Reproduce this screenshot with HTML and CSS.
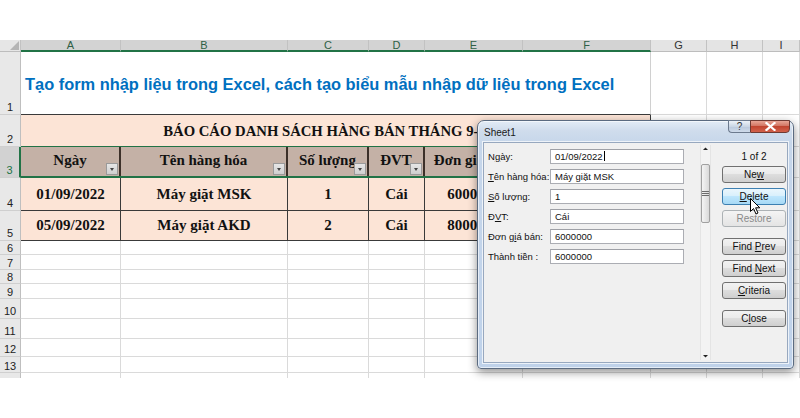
FILE: index.html
```html
<!DOCTYPE html>
<html lang="vi">
<head>
<meta charset="utf-8">
<title>Excel form</title>
<link rel="stylesheet" href="styles.css">
</head>
<body>
<div class="page">
  <div class="topgap"></div>
  <div class="sheet">
    <div class="row colhead">
      <span class="corner"><svg width="10" height="10" viewBox="0 0 10 10"><polygon points="10,1 10,10 1,10" fill="#b5b5b5"/></svg></span>
      <span class="ch sel">A</span><span class="ch sel">B</span><span class="ch sel">C</span><span class="ch sel">D</span><span class="ch sel">E</span><span class="ch sel">F</span>
      <span class="ch">G</span><span class="ch">H</span><span class="ch">I</span>
    </div>
    <div class="row r1">
      <span class="rh">1</span>
      <span class="merge title">Tạo form nhập liệu trong Excel, cách tạo biểu mẫu nhập dữ liệu trong Excel</span>
      <span></span><span></span><span></span>
    </div>
    <div class="row r2">
      <span class="rh">2</span>
      <span class="merge report">BÁO CÁO DANH SÁCH HÀNG BÁN THÁNG 9-2022</span>
      <span></span><span></span><span></span>
    </div>
    <div class="row r3">
      <span class="rh rh-sel">3</span>
      <div class="selrange">
        <span class="th">Ngày<i class="flt"></i></span>
        <span class="th">Tên hàng hóa<i class="flt"></i></span>
        <span class="th">Số lượng<i class="flt"></i></span>
        <span class="th">ĐVT<i class="flt"></i></span>
        <span class="th">Đơn giá bán<i class="flt"></i></span>
        <span class="th">Thành tiền<i class="flt"></i></span>
      </div>
      <span></span><span></span><span></span>
    </div>
    <div class="row r4">
      <span class="rh">4</span>
      <span class="td">01/09/2022</span><span class="td">Máy giặt MSK</span><span class="td">1</span><span class="td">Cái</span><span class="td">6000000</span><span class="td">6000000</span>
      <span></span><span></span><span></span>
    </div>
    <div class="row r5">
      <span class="rh">5</span>
      <span class="td">05/09/2022</span><span class="td">Máy giặt AKD</span><span class="td">2</span><span class="td">Cái</span><span class="td">8000000</span><span class="td">16000000</span>
      <span></span><span></span><span></span>
    </div>
    <div class="row r6"><span class="rh">6</span><span></span><span></span><span></span><span></span><span></span><span></span><span></span><span></span><span></span></div>
    <div class="row r7"><span class="rh">7</span><span></span><span></span><span></span><span></span><span></span><span></span><span></span><span></span><span></span></div>
    <div class="row r8"><span class="rh">8</span><span></span><span></span><span></span><span></span><span></span><span></span><span></span><span></span><span></span></div>
    <div class="row r9"><span class="rh">9</span><span></span><span></span><span></span><span></span><span></span><span></span><span></span><span></span><span></span></div>
    <div class="row r10"><span class="rh">10</span><span></span><span></span><span></span><span></span><span></span><span></span><span></span><span></span><span></span></div>
    <div class="row r11"><span class="rh">11</span><span></span><span></span><span></span><span></span><span></span><span></span><span></span><span></span><span></span></div>
    <div class="row r12"><span class="rh">12</span><span></span><span></span><span></span><span></span><span></span><span></span><span></span><span></span><span></span></div>
    <div class="row r13"><span class="rh">13</span><span></span><span></span><span></span><span></span><span></span><span></span><span></span><span></span><span></span></div>
    <div class="row r14"><span class="rh">14</span><span></span><span></span><span></span><span></span><span></span><span></span><span></span><span></span><span></span></div>
  </div>

  <div class="dlg">
    <div class="tbar">
      <span class="ttl">Sheet1</span>
      <div class="tbtns">
        <span class="help">?</span>
        <span class="xbtn"><svg width="11" height="9" viewBox="0 0 11 9"><path d="M1.5 1 L9.5 8 M9.5 1 L1.5 8" stroke="#fff" stroke-width="2.2" stroke-linecap="square"/></svg></span>
      </div>
    </div>
    <div class="panel">
      <div class="fields">
        <div class="frow"><label>N<u>g</u>ày:</label><div class="inp">01/09/2022<i class="caret"></i></div></div>
        <div class="frow"><label><u>T</u>ên hàng hóa:</label><div class="inp">Máy giặt MSK</div></div>
        <div class="frow"><label><u>S</u>ố lượng:</label><div class="inp">1</div></div>
        <div class="frow"><label>Đ<u>V</u>T:</label><div class="inp">Cái</div></div>
        <div class="frow"><label>Đơn g<u>i</u>á bán:</label><div class="inp">6000000</div></div>
        <div class="frow"><label>Thành tiền :</label><div class="inp">6000000</div></div>
      </div>
      <div class="vscroll">
        <svg class="arr" width="11" height="8" viewBox="0 0 11 8"><polygon points="3,5 8,5 5.5,2.5" fill="#222"/></svg>
        <div class="thumb"><svg width="7" height="7" viewBox="0 0 7 7"><path d="M0 1.5 H7 M0 3.5 H7 M0 5.5 H7" stroke="#6b6b6b" stroke-width="1"/></svg></div>
        <div class="track"></div>
        <svg class="arr" width="11" height="8" viewBox="0 0 11 8"><polygon points="3,3 8,3 5.5,5.5" fill="#222"/></svg>
      </div>
      <div class="btns">
        <div class="count">1 of 2</div>
        <button class="btn">Ne<u>w</u></button>
        <button class="btn hover"><u>D</u>elete</button>
        <button class="btn dis">Restore</button>
        <button class="btn grp">Find <u>P</u>rev</button>
        <button class="btn">Find <u>N</u>ext</button>
        <button class="btn"><u>C</u>riteria</button>
        <button class="btn grp">C<u>l</u>ose</button>
      </div>
    </div>
    <svg class="cursor" width="11" height="17" viewBox="0 0 11 17"><path d="M0.5 0.5 L0.5 13.5 L3.5 10.5 L6 16 L8 15 L5.6 9.8 L9.8 9.8 Z" fill="#fff" stroke="#000" stroke-width="1" stroke-linejoin="round"/></svg>
  </div>
</div>
</body>
</html>
```

FILE: styles.css
```css
body {
  margin: 0;
  background: #ffffff;
  font-family: "Liberation Sans", Arial, sans-serif;
}

.page {
  width: 800px;
  height: 418px;
  position: relative;
  overflow: hidden;
  background: #ffffff;
}

.topgap {
  height: 40px;
}

.sheet {
  height: 338px;
  overflow: hidden;
}

.row {
  display: grid;
  grid-template-columns: 21px 100px 167px 81px 56px 98px 128px 56px 56px 37px;
}

.row > * {
  box-sizing: border-box;
  border-right: 1px solid #dadada;
  border-bottom: 1px solid #dadada;
  min-width: 0;
  overflow: hidden;
}

.r1 { height: 63px; }
.r2 { height: 32px; }
.r3 { height: 31px; }
.r4 { height: 33px; }
.r5 { height: 30px; }
.r6 { height: 14px; }
.r7 { height: 15px; }
.r8 { height: 14px; }
.r9 { height: 15px; }
.r10 { height: 20px; }
.r11 { height: 20px; }
.r12 { height: 18px; }
.r13 { height: 16px; }
.r14 { height: 16px; }

/* column headers */
.colhead {
  height: 12px;
}

.colhead > * {
  border-right: 1px solid #c2c2c2;
  border-bottom: 1px solid #bdbdbd;
}

.corner {
  background: #e6e6e6;
  display: flex;
  align-items: flex-end;
  justify-content: flex-end;
  padding: 0 1px 1px 0;
}

.ch {
  background: #e4e4e4;
  font-size: 11px;
  line-height: 11px;
  text-align: center;
  color: #333;
}

.ch.sel {
  background: #d3d3d3;
  color: #2f5f45;
  border-bottom: 2px solid #217346;
  line-height: 10px;
}

/* row headers */
.rh {
  background: #e8e8e8;
  border-right: 1px solid #bfbfbf !important;
  border-bottom: 1px solid #cfcfcf !important;
  font-size: 11px;
  line-height: 11px;
  color: #222;
  display: flex;
  align-items: flex-end;
  justify-content: center;
  padding-bottom: 1px;
}

.r6 .rh, .r7 .rh, .r8 .rh, .r9 .rh, .r13 .rh, .r14 .rh {
  padding-bottom: 0;
}

.rh-sel {
  background: #d2d2d2;
  color: #217346;
  border-right: 2px solid #217346 !important;
}

/* merged title cells */
.merge {
  grid-column: span 6;
  display: flex;
  align-items: center;
}

.title {
  color: #0070c0;
  font-weight: bold;
  font-size: 16.4px;
  padding-left: 4px;
  padding-top: 3px;
  border-right: 1px solid #d0d0d0;
  border-bottom: 1px solid #3a3a3a;
  white-space: nowrap;
}

.report {
  justify-content: center;
  background: #fce4d6;
  font-family: "Liberation Serif", "Times New Roman", serif;
  font-weight: bold;
  font-size: 14.7px;
  color: #111;
  border-right: 1px solid #3a3a3a;
  border-bottom: 1px solid #217346;
  white-space: nowrap;
  padding-top: 2px;
}

/* header row selection */
.selrange {
  grid-column: span 6;
  display: grid;
  grid-template-columns: 100px 167px 81px 56px 98px 128px;
  position: relative;
  border-right: none !important;
  border-bottom: 2px solid #217346 !important;
  overflow: visible;
}

.th {
  position: relative;
  box-sizing: border-box;
  background: #c4b1a6;
  border-right: 2px solid #3c3029;
  font-family: "Liberation Serif", "Times New Roman", serif;
  font-weight: bold;
  font-size: 15px;
  color: #111;
  display: flex;
  align-items: center;
  justify-content: center;
  white-space: nowrap;
  overflow: hidden;
  padding-bottom: 2px;
}

.flt {
  position: absolute;
  right: 1px;
  bottom: 1px;
  width: 12px;
  height: 12px;
  box-sizing: border-box;
  background: linear-gradient(#e6e6e6, #cfcfcf);
  border: 1px solid #9a9a9a;
}

.flt::after {
  content: "";
  position: absolute;
  left: 3px;
  top: 4px;
  border-left: 2.5px solid transparent;
  border-right: 2.5px solid transparent;
  border-top: 3px solid #444;
}

/* data rows */
.td {
  background: #fce4d6;
  border-right: 1px solid #3a3a3a !important;
  border-bottom: 1px solid #3a3a3a !important;
  font-family: "Liberation Serif", "Times New Roman", serif;
  font-weight: bold;
  font-size: 15px;
  color: #111;
  display: flex;
  align-items: center;
  justify-content: center;
  white-space: nowrap;
}

/* dialog */
.dlg {
  position: absolute;
  left: 477px;
  top: 120px;
  width: 317px;
  height: 249px;
  box-sizing: border-box;
  border: 1px solid #5b6b80;
  border-radius: 7px 7px 4px 4px;
  background: linear-gradient(180deg, #e3ecf6 0px, #cfdcec 10px, #c6d6ea 22px, #bfd2ea 100%);
  box-shadow: 0 3px 10px rgba(0, 0, 0, 0.45), inset 0 0 0 1px rgba(255, 255, 255, 0.6);
  font-family: "Liberation Sans", Arial, sans-serif;
  font-size: 9.5px;
  color: #111;
  display: flex;
  flex-direction: column;
  padding: 0 5px 5px 5px;
}

.tbar {
  height: 21px;
  display: flex;
  align-items: flex-start;
  justify-content: space-between;
}

.ttl {
  font-size: 10px;
  padding: 6px 0 0 1px;
  color: #1a1a1a;
}

.tbtns {
  display: flex;
  margin-top: -1px;
  margin-right: -2px;
}

.help {
  width: 22px;
  height: 13px;
  box-sizing: border-box;
  border: 1px solid #6c7a8e;
  border-right: none;
  border-radius: 0 0 0 4px;
  background: linear-gradient(#edf2f8, #cad6e5 50%, #b9c8dc 51%, #cfdbea);
  font-size: 10px;
  line-height: 11px;
  text-align: center;
  color: #333;
}

.xbtn {
  width: 40px;
  height: 13px;
  box-sizing: border-box;
  border: 1px solid #6e3a33;
  border-radius: 0 0 4px 0;
  background: linear-gradient(#e8a595, #d27563 45%, #c14530 50%, #d2614b);
  display: flex;
  align-items: center;
  justify-content: center;
}

.panel {
  flex: 1;
  display: flex;
  background: #f0f0f0;
  border: 1px solid #97a8bf;
  box-shadow: 0 0 0 1px rgba(255, 255, 255, 0.7);
}

.fields {
  width: 200px;
  padding: 6px 0 0 4px;
  box-sizing: content-box;
  display: flex;
  flex-direction: column;
  gap: 5px;
}

.frow {
  display: flex;
  align-items: center;
  height: 15px;
}

.frow label {
  width: 62px;
  white-space: nowrap;
}

.inp {
  position: relative;
  width: 134px;
  height: 15px;
  box-sizing: border-box;
  border: 1px solid #abadb3;
  border-top-color: #9ea0a6;
  background: #ffffff;
  padding-left: 4px;
  line-height: 13px;
  white-space: nowrap;
}

.caret {
  display: inline-block;
  width: 1px;
  height: 10px;
  background: #000;
  vertical-align: -1px;
  margin-left: 1px;
}

.vscroll {
  width: 11px;
  margin: 2px 0 2px 12px;
  display: flex;
  flex-direction: column;
  background: #f3f3f3;
  border-left: 1px solid #e4e4e4;
  border-right: 1px solid #e4e4e4;
  box-sizing: border-box;
  align-items: center;
}

.arr {
  flex: none;
  display: block;
}

.thumb {
  width: 9px;
  height: 59px;
  box-sizing: border-box;
  margin-top: 11px;
  border: 1px solid #a0a0a0;
  border-radius: 2px;
  background: linear-gradient(90deg, #f4f4f4, #e4e4e4 60%, #d9d9d9);
  display: flex;
  align-items: center;
  justify-content: center;
}

.track {
  flex: 1;
}

.btns {
  width: 64px;
  margin-left: 11px;
  padding-top: 8px;
  display: flex;
  flex-direction: column;
  gap: 5px;
}

.count {
  height: 12px;
  line-height: 12px;
  text-align: center;
  margin-bottom: -2px;
  font-size: 10px;
}

.btn {
  height: 17px;
  padding: 0;
  box-sizing: border-box;
  border: 1px solid #707070;
  border-radius: 3px;
  background: linear-gradient(#f2f2f2, #ebebeb 45%, #dddddd 50%, #cfcfcf);
  font-family: "Liberation Sans", Arial, sans-serif;
  font-size: 10px;
  color: #111;
  line-height: 15px;
}

.btn.hover {
  border-color: #3c7fb1;
  background: linear-gradient(#eaf6fd, #d9f0fc 45%, #bee6fd 50%, #a7d9f5);
}

.btn.dis {
  color: #8a8a8a;
  border-color: #adb2b5;
  background: linear-gradient(#f4f4f4, #ececec 50%, #e4e4e4);
}

.btn.grp {
  margin-top: 6px;
}

.cursor {
  position: absolute;
  left: 272px;
  top: 77px;
}
```
